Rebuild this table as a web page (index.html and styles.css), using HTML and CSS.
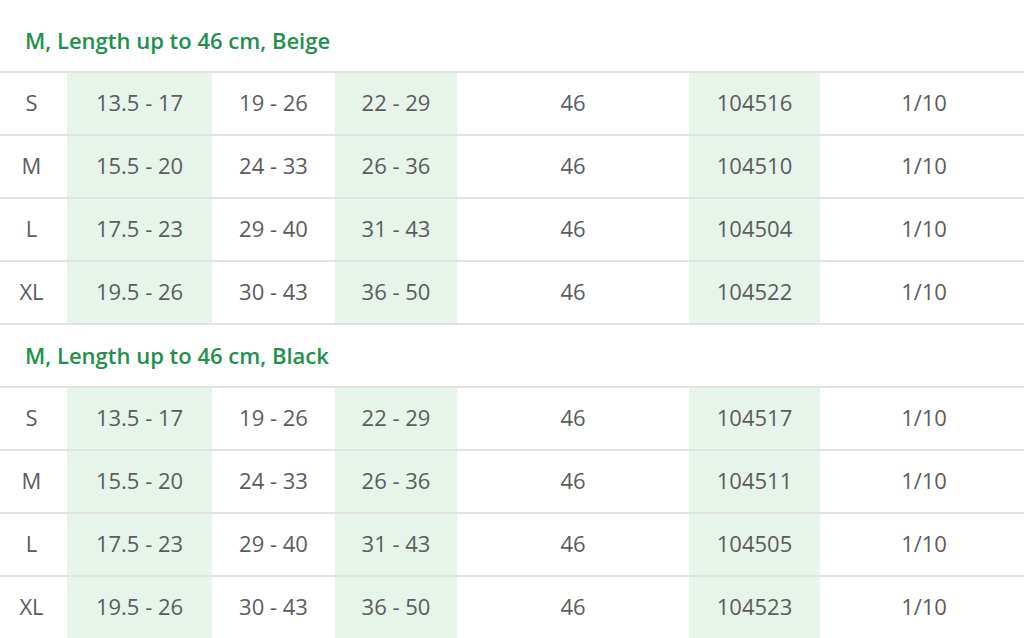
FILE: index.html
```html
<!DOCTYPE html>
<html>
<head>
<meta charset="utf-8">
<link rel="stylesheet" href="styles.css">
</head>
<body>
<table class="sizes">
  <colgroup>
    <col class="c1"><col class="c2 hl"><col class="c3"><col class="c4 hl"><col class="c5"><col class="c6 hl"><col class="c7">
  </colgroup>
  <tbody>
    <tr class="group"><td colspan="7">M, Length up to 46 cm, Beige</td></tr>
    <tr><td class="size">S</td><td class="g">13.5 - 17</td><td>19 - 26</td><td class="g">22 - 29</td><td>46</td><td class="g">104516</td><td>1/10</td></tr>
    <tr><td class="size">M</td><td class="g">15.5 - 20</td><td>24 - 33</td><td class="g">26 - 36</td><td>46</td><td class="g">104510</td><td>1/10</td></tr>
    <tr><td class="size">L</td><td class="g">17.5 - 23</td><td>29 - 40</td><td class="g">31 - 43</td><td>46</td><td class="g">104504</td><td>1/10</td></tr>
    <tr><td class="size">XL</td><td class="g">19.5 - 26</td><td>30 - 43</td><td class="g">36 - 50</td><td>46</td><td class="g">104522</td><td>1/10</td></tr>
    <tr class="group"><td colspan="7">M, Length up to 46 cm, Black</td></tr>
    <tr><td class="size">S</td><td class="g">13.5 - 17</td><td>19 - 26</td><td class="g">22 - 29</td><td>46</td><td class="g">104517</td><td>1/10</td></tr>
    <tr><td class="size">M</td><td class="g">15.5 - 20</td><td>24 - 33</td><td class="g">26 - 36</td><td>46</td><td class="g">104511</td><td>1/10</td></tr>
    <tr><td class="size">L</td><td class="g">17.5 - 23</td><td>29 - 40</td><td class="g">31 - 43</td><td>46</td><td class="g">104505</td><td>1/10</td></tr>
    <tr><td class="size">XL</td><td class="g">19.5 - 26</td><td>30 - 43</td><td class="g">36 - 50</td><td>46</td><td class="g">104523</td><td>1/10</td></tr>
  </tbody>
</table>
</body>
</html>
```
FILE: styles.css
```css
html, body {
  margin: 0;
  padding: 0;
  background: #ffffff;
  overflow: hidden;
}
body {
  padding-top: 10px;
  font-family: "Open Sans", "DejaVu Sans", sans-serif;
}
.sizes {
  border-collapse: collapse;
  table-layout: fixed;
  width: 1028px;
}
.c1 { width: 67px; }
.c2 { width: 145px; }
.c3 { width: 123px; }
.c4 { width: 122px; }
.c5 { width: 232px; }
.c6 { width: 131px; }
.c7 { width: 208px; }
.sizes td {
  height: 58px;
  padding: 0 0 3px 0;
  text-align: center;
  vertical-align: middle;
  font-size: 22px;
  color: #5c5c5c;
  border-bottom: 2px solid #e2e2e2;
}
.sizes td.size {
  padding-right: 4px;
}
.sizes td.g {
  background: #e6f4ea;
}
.sizes tr.group td {
  text-align: left;
  padding-left: 25px;
  font-size: 22px;
  font-weight: 600;
  color: #22904b;
  padding-bottom: 2px;
  height: 59px;
}
```
